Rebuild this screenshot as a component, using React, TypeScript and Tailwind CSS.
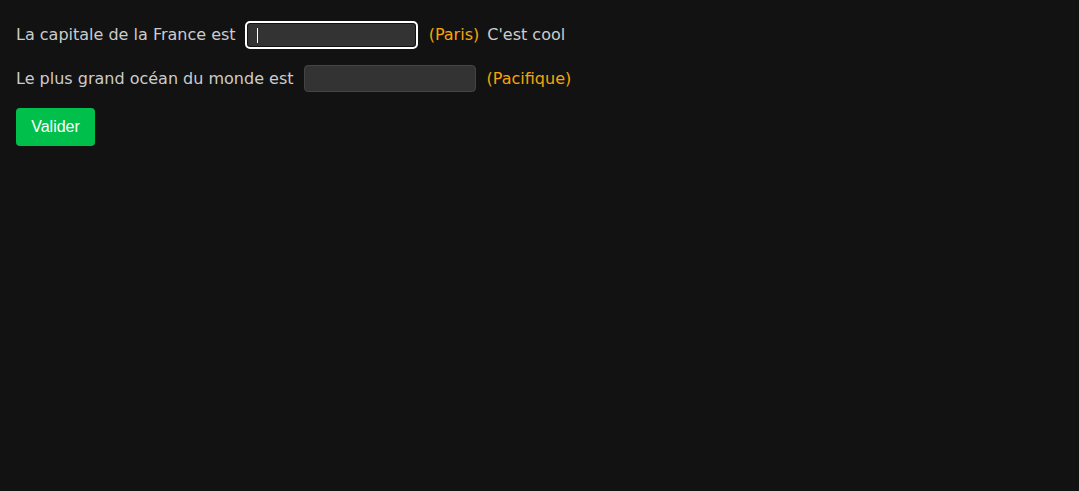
const Question = ({
  label,
  answer,
  extra,
  focused,
}: {
  label: string
  answer: string
  extra?: string
  focused?: boolean
}) => {
  return (
    <div className="flex h-[27px] items-center">
      <span>{label}</span>
      {focused ? (
        <span className="relative ml-[9px] flex">
          <input
            type="text"
            className="h-[28px] w-[173px] rounded-[5px] border-2 border-white bg-[#333333] px-2 text-[#dddddd] shadow-[inset_0_0_0_1px_#121212] outline-none"
          />
          {/* caret */}
          <span className="absolute left-[12px] top-[7px] h-[15px] w-px bg-white"></span>
        </span>
      ) : (
        <input
          type="text"
          className="ml-[10px] h-[27px] w-[172px] rounded-[4px] border border-[#444444] bg-[#333333] px-2 text-[#dddddd] outline-none"
        />
      )}
      <span className="ml-[11px] text-[#f5a50a]">({answer})</span>
      {extra && <span className="ml-[8px]">{extra}</span>}
    </div>
  )
}

const App = () => {
  return (
    <div className="min-h-screen bg-[#121212] px-4 pt-[21px] font-['DejaVu_Sans',sans-serif] text-[16px] text-[#cccccc]">
      <div className="flex flex-col gap-[17px]">
        <Question label="La capitale de la France est" answer="Paris" extra="C'est cool" focused />
        <Question label="Le plus grand océan du monde est" answer="Pacifique" />
      </div>
      <button className="mt-4 h-[38px] w-[79px] rounded-[4px] bg-[#00c04b] font-['Liberation_Sans',sans-serif] text-[16px] text-white">
        Valider
      </button>
    </div>
  )
}

export default App
